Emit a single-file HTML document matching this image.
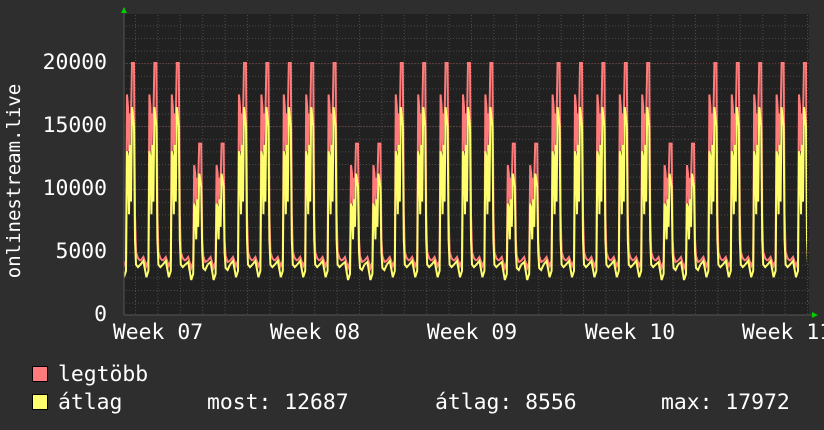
<!DOCTYPE html>
<html><head><meta charset="utf-8"><style>
html,body{margin:0;padding:0;background:#2e2e2e;width:824px;height:430px;overflow:hidden}
svg{display:block}
text{font-family:"DejaVu Sans Mono","Liberation Mono",monospace;fill:#fff;font-size:21.4px}
</style></head><body>
<svg width="824" height="430" xmlns="http://www.w3.org/2000/svg" xmlns:xlink="http://www.w3.org/1999/xlink">
<defs>
<clipPath id="cp"><rect x="124" y="14" width="683" height="301"/></clipPath>
<pattern id="hg" x="0" y="0.2" width="685" height="12.6" patternUnits="userSpaceOnUse">
<line x1="0" x2="685" y1="0.5" y2="0.5" stroke="#4a4a4a" stroke-dasharray="1,2"/>
</pattern>
<pattern id="vg" x="0.6" y="0" width="22.4" height="301" patternUnits="userSpaceOnUse">
<line x1="0.5" x2="0.5" y1="0" y2="301" stroke="#4a4a4a" stroke-dasharray="1,2"/>
</pattern>
<g id="wd">
<polyline fill="none" stroke="#ff7b7b" stroke-width="2" points="0,260.8 3,257 6,265.9 8,260.8 9,94.5 10,107.1 11,151.2 12,113.4 13,119.7 14,63 16,63 17,214.2 18,252 20,258.3 22.4,260.8"/>
<polyline fill="none" stroke="#ffff6e" stroke-width="2" points="0,264.6 3,260.8 6,277.2 8,270.9 9,151.2 10,157.5 11,214.2 12,144.9 13,201.6 14,107.1 16,126 17,239.4 18,264.6 20,267.1 22.4,264.6"/>
</g>
<g id="we">
<polyline fill="none" stroke="#ff7b7b" stroke-width="2" points="0,260.8 3,257 6,268 8,262 9,165.1 10,173.6 11,203.6 12,177.9 13,182.2 14,143.6 16,143.6 17,239.4 18,256 20,262 22.4,260.8"/>
<polyline fill="none" stroke="#ffff6e" stroke-width="2" points="0,264.6 3,262 6,280 8,274 9,203.6 10,207.9 11,239.4 12,199.3 13,226.8 14,173.6 16,186.5 17,252 18,268 20,270 22.4,264.6"/>
</g>
</defs>
<rect x="124" y="14" width="685" height="301" fill="#212121"/>
<rect x="124" y="14" width="685" height="301" fill="url(#hg)"/>
<rect x="124" y="14" width="685" height="301" fill="url(#vg)"/>
<g stroke="#6a3a3a" stroke-dasharray="1,2">
<line x1="124" x2="809" y1="252.5" y2="252.5"/><line x1="124" x2="809" y1="189.5" y2="189.5"/><line x1="124" x2="809" y1="126.5" y2="126.5"/><line x1="124" x2="809" y1="63.5" y2="63.5"/>
</g>
<g clip-path="url(#cp)">
<use xlink:href="#wd" x="118"/><use xlink:href="#wd" x="140.4"/><use xlink:href="#wd" x="162.8"/>
<use xlink:href="#we" x="185.2"/><use xlink:href="#we" x="207.6"/>
<use xlink:href="#wd" x="230"/><use xlink:href="#wd" x="252.4"/><use xlink:href="#wd" x="274.8"/><use xlink:href="#wd" x="297.2"/><use xlink:href="#wd" x="319.6"/>
<use xlink:href="#we" x="342"/><use xlink:href="#we" x="364.4"/>
<use xlink:href="#wd" x="386.8"/><use xlink:href="#wd" x="409.2"/><use xlink:href="#wd" x="431.6"/><use xlink:href="#wd" x="454"/><use xlink:href="#wd" x="476.4"/>
<use xlink:href="#we" x="498.8"/><use xlink:href="#we" x="521.2"/>
<use xlink:href="#wd" x="543.6"/><use xlink:href="#wd" x="566"/><use xlink:href="#wd" x="588.4"/><use xlink:href="#wd" x="610.8"/><use xlink:href="#wd" x="633.2"/>
<use xlink:href="#we" x="655.6"/><use xlink:href="#we" x="678"/>
<use xlink:href="#wd" x="700.4"/><use xlink:href="#wd" x="722.8"/><use xlink:href="#wd" x="745.2"/><use xlink:href="#wd" x="767.6"/><use xlink:href="#wd" x="790"/>
</g>
<line x1="124" y1="315" x2="812" y2="315" stroke="#555"/>
<line x1="124" y1="12" x2="124" y2="315" stroke="#555"/>
<polygon points="121,13 127,13 124,7" fill="#0c0"/>
<polygon points="812,312 812,318 818,315" fill="#0c0"/>
<text x="107" y="69" text-anchor="end">20000</text>
<text x="107" y="132" text-anchor="end">15000</text>
<text x="107" y="195" text-anchor="end">10000</text>
<text x="107" y="258" text-anchor="end">5000</text>
<text x="107" y="321" text-anchor="end">0</text>
<text x="158" y="339" text-anchor="middle">Week 07</text>
<text x="315" y="339" text-anchor="middle">Week 08</text>
<text x="472" y="339" text-anchor="middle">Week 09</text>
<text x="630" y="339" text-anchor="middle">Week 10</text>
<text x="787" y="339" text-anchor="middle">Week 11</text>
<text transform="translate(20,181) rotate(-90)" text-anchor="middle" style="font-size:19px">onlinestream.live</text>
<rect x="32.5" y="366.5" width="15" height="15" fill="#ff7b7b" stroke="#000"/>
<rect x="32.5" y="394.5" width="15" height="15" fill="#ffff6e" stroke="#000"/>
<text x="58" y="381">legtöbb</text>
<text x="58" y="409">átlag</text>
<text x="207" y="409">most: 12687</text>
<text x="435" y="409">átlag: 8556</text>
<text x="661" y="409">max: 17972</text>
</svg>
</body></html>
